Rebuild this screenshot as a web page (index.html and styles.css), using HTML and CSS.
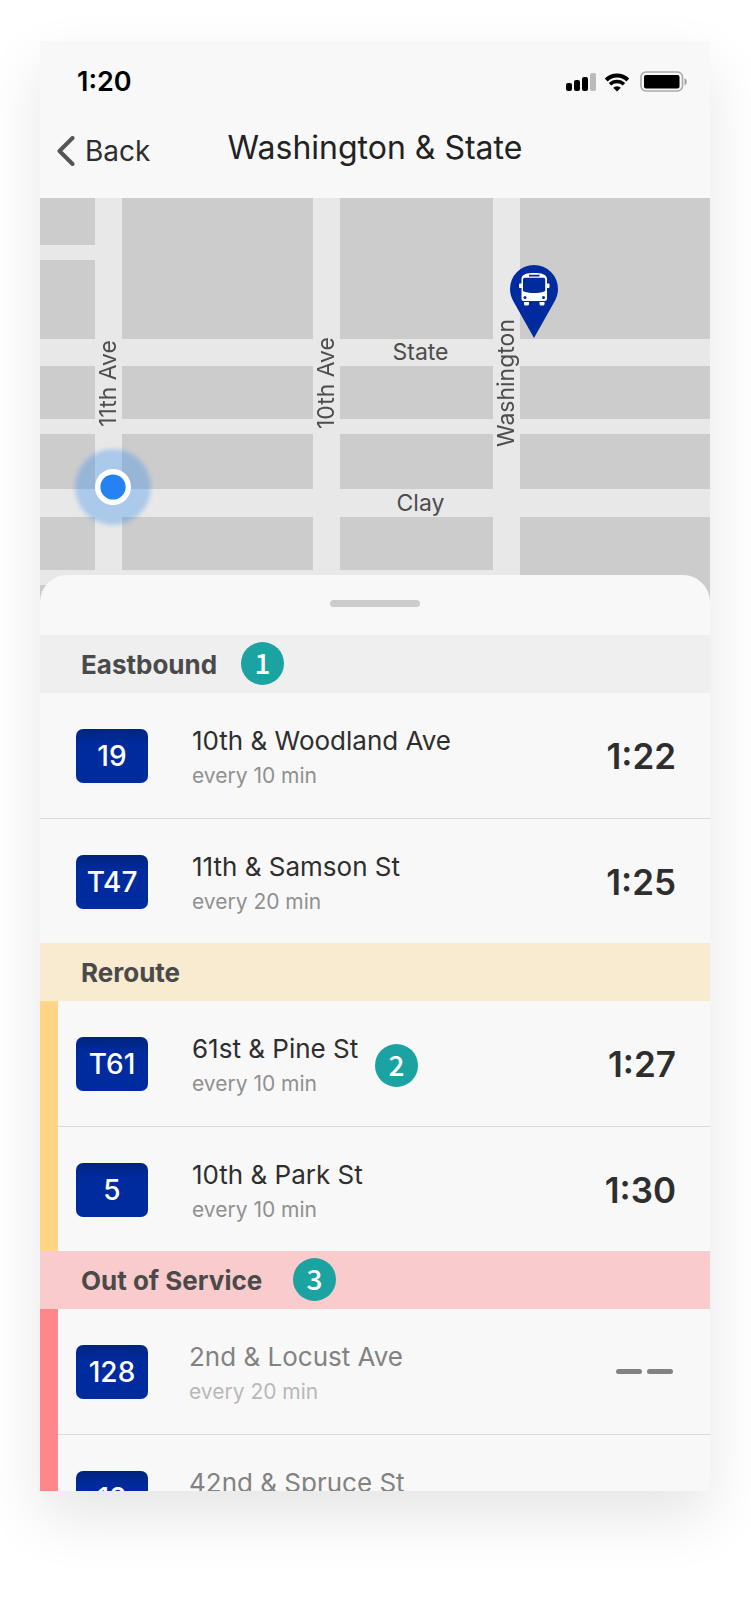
FILE: index.html
```html
<!DOCTYPE html>
<html lang="en">
<head>
<meta charset="utf-8">
<meta name="viewport" content="width=device-width, initial-scale=1">
<title>Washington &amp; State</title>
<link rel="stylesheet" href="styles.css">
</head>
<body>
<main class="phone">
  <header class="top">
    <div class="status">
      <time class="clock">1:20</time>
      <div class="indicators">
        <svg width="30" height="18" viewBox="0 0 30 18" aria-hidden="true">
          <rect x="0" y="10" width="6" height="8" rx="2"/>
          <rect x="8" y="7" width="6" height="11" rx="2"/>
          <rect x="16" y="4" width="6" height="14" rx="2"/>
          <rect x="24" y="0" width="6" height="18" rx="2" fill="#bbb"/>
        </svg>
        <svg width="26" height="19" viewBox="0 0 26 19" aria-hidden="true">
          <path d="M2.200 7 A15.500 15.500 0 0 1 23.800 7" fill="none" stroke="#000" stroke-width="4"/>
          <path d="M6 11.300 A10 10 0 0 1 20 11.300" fill="none" stroke="#000" stroke-width="3.400"/>
          <path d="M13 18.500 L9.200 14.700 A5.500 5.500 0 0 1 16.800 14.700 Z"/>
        </svg>
        <svg class="battery" width="48" height="22" viewBox="0 0 48 22" aria-hidden="true">
          <rect x="1" y="1" width="41.500" height="19" rx="5" fill="none" stroke="#a9a9a9" stroke-width="1.600"/>
          <rect x="4" y="4" width="35.500" height="13.500" rx="2"/>
          <path d="M44.500 7 A4.200 4.200 0 0 1 44.500 14.500 Z" fill="#a0a0a0"/>
        </svg>
      </div>
    </div>
    <nav class="bar">
      <button class="back" type="button">
        <svg width="18" height="30" viewBox="0 0 18 30" aria-hidden="true"><path d="M15.500 2 L2.500 15 L15.500 28" fill="none" stroke="#555" stroke-width="4" stroke-linecap="round" stroke-linejoin="round"/></svg>
        <span>Back</span>
      </button>
      <h1 class="title">Washington &amp; State</h1>
    </nav>
  </header>

  <section class="map" aria-label="Map">
    <div class="block a split"></div>
    <div class="block b r1"></div><div class="block c r1"></div><div class="block d r1"></div>
    <div class="block a r2"></div><div class="block b r2"></div><div class="block c r2"></div><div class="block d r2"></div>
    <div class="block a r3"></div><div class="block b r3"></div><div class="block c r3"></div><div class="block d r3"></div>
    <div class="block a r4"></div><div class="block b r4"></div><div class="block c r4"></div><div class="block d r4 tall"></div>
    <div class="block a r5"></div>
    <span class="street up eleventh">11th Ave</span>
    <span class="street up tenth">10th Ave</span>
    <span class="street up washington">Washington</span>
    <span class="street across state">State</span>
    <span class="street across clay">Clay</span>
    <svg class="here" viewBox="0 0 90 90" role="img" aria-label="Your location">
      <defs><filter id="soft"><feGaussianBlur stdDeviation="2"/></filter></defs>
      <circle cx="45" cy="45" r="38" fill="#2482f0" fill-opacity=".3" filter="url(#soft)"/>
      <circle cx="45" cy="45" r="18" fill="#fff"/>
      <circle cx="45" cy="45" r="12.600" fill="#2482f3"/>
    </svg>
    <svg class="pin" viewBox="0 0 48 73" role="img" aria-label="Bus stop">
      <path d="M24 0 A24 24 0 0 0 0 24 C0 29 1.500 33 3.500 36.500 L24 73 L44.500 36.500 C46.500 33 48 29 48 24 A24 24 0 0 0 24 0 Z" fill="#002b9f"/>
      <path d="M11.500 14 C11.500 9 17 8 24 8 S37 9 37 14 V18.500 H38.500 Q39.500 18.500 39.500 19.500 V22 Q39.500 23 38.500 23 H37 V34 Q37 36 35 36 H13.500 Q11.500 36 11.500 34 V23 H10 Q9 23 9 22 V19.500 Q9 18.500 10 18.500 H11.500 Z" fill="#fff"/>
      <path d="M14.500 12.800 H33.500 Q35.200 12.800 35.200 14.500 V26 Q31 28 24 28 T13 26 V14.500 Q13 12.800 14.500 12.800 Z M19 9.800 H29.500 V11.400 H19 Z" fill="#002b9f"/>
      <circle cx="15" cy="32.500" r="1.500" fill="#002b9f"/><circle cx="33.500" cy="32.500" r="1.500" fill="#002b9f"/>
      <path d="M14 37 H19 V39 Q19 40.500 17.500 40.500 H15.500 Q14 40.500 14 39 Z M29.500 37 H34.500 V39 Q34.500 40.500 33 40.500 H31 Q29.500 40.500 29.500 39 Z" fill="#fff"/>
    </svg>
  </section>

  <div class="sheet">
    <div class="grip"><span class="handle"></span></div>

    <section class="group">
      <h2 class="heading">Eastbound<span class="marker one">1</span></h2>
      <ul class="routes">
        <li class="route">
          <span class="badge">19</span>
          <div class="info"><p class="stop">10th &amp; Woodland Ave</p><p class="every">every 10 min</p></div>
          <time class="time">1:22</time>
        </li>
        <li class="route">
          <span class="badge">T47</span>
          <div class="info"><p class="stop">11th &amp; Samson St</p><p class="every">every 20 min</p></div>
          <time class="time">1:25</time>
        </li>
      </ul>
    </section>

    <section class="group reroute">
      <h2 class="heading">Reroute</h2>
      <ul class="routes">
        <li class="route">
          <span class="badge">T61</span>
          <div class="info"><p class="stop">61st &amp; Pine St</p><p class="every">every 10 min</p></div>
          <time class="time">1:27</time>
          <span class="marker two">2</span>
        </li>
        <li class="route">
          <span class="badge">5</span>
          <div class="info"><p class="stop">10th &amp; Park St</p><p class="every">every 10 min</p></div>
          <time class="time">1:30</time>
        </li>
      </ul>
    </section>

    <section class="group closed">
      <h2 class="heading">Out of Service<span class="marker three">3</span></h2>
      <ul class="routes">
        <li class="route">
          <span class="badge">128</span>
          <div class="info"><p class="stop">2nd &amp; Locust Ave</p><p class="every">every 20 min</p></div>
          <span class="none" role="img" aria-label="No arrival time"><i class="dash"></i><i class="dash"></i></span>
        </li>
        <li class="route">
          <span class="badge">12</span>
          <div class="info"><p class="stop">42nd &amp; Spruce St</p></div>
        </li>
      </ul>
    </section>
  </div>
</main>
</body>
</html>
```
FILE: styles.css
```css
* { box-sizing: border-box; }

body {
  margin: 0;
  padding: 41px 41px 121px 40px;
  background: #fff;
  font-family: Inter, "Liberation Sans", sans-serif;
  color: #2e2e2e;
}

h1, h2, p, ul { margin: 0; padding: 0; font-weight: 400; }
ul { list-style: none; }

.phone {
  height: calc(100vh - 162px);
  overflow: hidden;
  background: #f8f8f8;
  box-shadow: 0 26px 56px rgba(0, 0, 0, .1);
}

/* Status and navigation */
.top { height: 157px; padding-top: 24px; }

.status {
  display: flex;
  align-items: center;
  justify-content: space-between;
  height: 34px;
  padding: 0 22px 0 37px;
}
.clock { font-size: 27px; line-height: 34px; font-weight: 600; color: #000; }
.indicators { display: flex; align-items: center; gap: 8px; }
.battery { margin-left: 2px; }

.bar {
  display: grid;
  grid-template-columns: 1fr auto 1fr;
  align-items: start;
  margin-top: 25px;
  padding: 0 17px;
}
.back {
  display: flex;
  align-items: center;
  justify-self: start;
  gap: 10px;
  padding: 3px 0 0;
  border: 0;
  background: none;
  font: inherit;
  font-size: 28px;
  line-height: 48px;
  color: #2e2e2e;
}
.title { font-size: 32px; line-height: 48px; color: #222; }

/* Map */
.map {
  position: relative;
  display: grid;
  grid-template-columns: 55px 27px 191fr 27px 153fr 27px 190fr;
  grid-template-rows: 141px 27px 53px 15px 55px 28px 53px 15px 40px;
  background: #e8e8e8;
}
.block { background: #ccc; }
.a { grid-column: 1; }
.b { grid-column: 3; }
.c { grid-column: 5; }
.d { grid-column: 7; }
.r1, .split { grid-row: 1; }
.r2 { grid-row: 3; }
.r3 { grid-row: 5; }
.r4 { grid-row: 7; }
.r5 { grid-row: 9; }
.tall { grid-row: 7 / 10; }
.split { background: linear-gradient(#ccc 47px, #e8e8e8 47px, #e8e8e8 62px, #ccc 62px); }

.street {
  place-self: center;
  font-size: 23px;
  line-height: 27px;
  color: #4d4d4d;
  white-space: nowrap;
}
.up { writing-mode: vertical-rl; rotate: 180deg; grid-row: 2 / 4; margin-top: 8px; }
.across { padding-left: 8px; }
.eleventh { grid-column: 2; }
.tenth { grid-column: 4; }
.washington { grid-column: 6; }
.state { grid-column: 5; grid-row: 2; }
.clay { grid-column: 5; grid-row: 6; }

.here { position: absolute; left: 28px; top: 244px; width: 90px; height: 90px; }
.pin { position: absolute; right: 152px; top: 67px; width: 48px; height: 73px; }

/* Arrivals sheet */
.sheet {
  position: relative;
  margin-top: -50px;
  border-radius: 27px 27px 0 0;
  background: #f8f8f8;
}
.grip { display: flex; justify-content: center; height: 60px; padding-top: 25px; }
.handle { width: 90px; height: 7px; border-radius: 4px; background: #ccc; }

.heading {
  position: relative;
  padding: 2px 41px 0;
  background: #efefef;
  font-size: 26px;
  line-height: 56px;
  font-weight: 700;
  color: #4a4a4a;
}

.route {
  position: relative;
  display: flex;
  align-items: flex-start;
  height: 125px;
  padding: 0 34px 0 36px;
}
.route + .route { border-top: 1px solid #dadada; }
.badge {
  flex: none;
  width: 72px;
  margin-top: 36px;
  border-radius: 7px;
  background: linear-gradient(#00247f, #002b9f 16px);
  font-size: 28px;
  line-height: 54px;
  font-weight: 500;
  text-align: center;
  color: #fff;
}
.info { flex: 1; margin: 30px 0 0 44px; white-space: nowrap; }
.stop { font-size: 26px; line-height: 36px; }
.every { font-size: 21px; line-height: 34px; color: #909090; }
.time { margin-top: 39px; font-size: 35px; line-height: 48px; font-weight: 600; }

.reroute .heading { background: #f8ebd0; }
.closed .heading { background: #f9cbcd; }
.reroute .routes { border-left: 18px solid #fdd585; }
.closed .routes { border-left: 18px solid #ff868a; }
.reroute .route, .closed .route { padding-left: 18px; }
.closed .info { margin-left: 41px; }
.closed .stop { color: #828282; }
.closed .every { color: #b8b8b8; }

.none { display: flex; gap: 5px; padding: 60px 3px 0 0; }
.dash { width: 26px; height: 5px; border-radius: 3px; background: #828282; }

/* Numbered callouts */
.marker {
  position: absolute;
  width: 43px;
  height: 43px;
  border-radius: 50%;
  background: #1aa3a1;
  font-family: "Noto Sans CJK JP", "Noto Sans", sans-serif;
  font-size: 28px;
  line-height: 41px;
  font-weight: 500;
  text-align: center;
  color: #fff;
}
.one { left: 201px; top: 7px; }
.two { left: 317px; top: 43px; }
.three { left: 253px; top: 7px; }
```
